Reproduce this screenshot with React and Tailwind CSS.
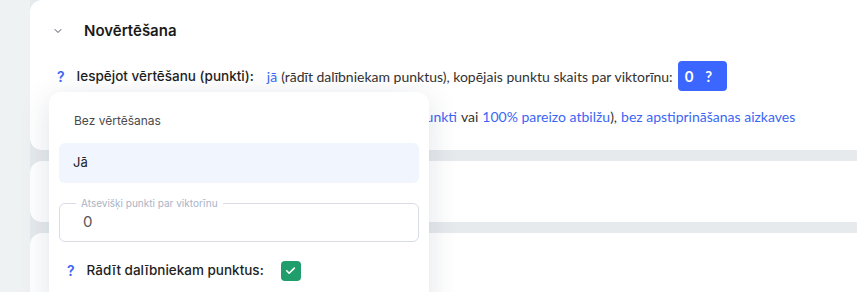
import React from "react";

const inter = "font-['Inter',sans-serif]";

const Q = ({ className = "" }) => (
  <span className={"font-['Inter',sans-serif] text-[#3b66f5] font-semibold text-[14px] " + className}>?</span>
);

export default function App() {
  return (
    <div className="relative h-[292px] w-[857px] overflow-hidden bg-[#eef2f2] font-['Lato',sans-serif] text-[#222]">
      <div className="ml-[30px] -mr-6 flex flex-col gap-[11px] bg-[#e6eaed]">
        <div className="h-[150px] rounded-xl bg-white pl-[23px] pt-[19px]">
          <div className="flex h-[24px] items-center">
            <svg width="12" height="12" viewBox="0 0 24 24" fill="none" stroke="#4b5563" strokeWidth="2" strokeLinecap="round" strokeLinejoin="round" className="ml-[-1px]">
              <path d="M6 9l6 6 6-6" />
            </svg>
            <span className={inter + " ml-[20px] text-[15px] font-semibold text-[#1a1a1a]"}>Novērtēšana</span>
          </div>
          <div className="mt-[18px] flex h-[30px] items-center text-[14px]">
            <Q className="ml-[4px]" />
            <span className={inter + " ml-[12px] text-[13.5px] font-medium text-[#1f1f1f]"}>Iespējot vērtēšanu (punkti):</span>
            <span className="ml-[13px] text-[#3b66f5]">jā</span>
            <span className="ml-[4px] text-[#333]">(rādīt dalībniekam punktus), kopējais punktu skaits par viktorīnu:</span>
            <span className="ml-[5px] flex h-[30px] w-[49px] items-center rounded-[4px] bg-[#3b66ff] pl-[7px] font-bold text-white text-[15px]">
              0<span className="ml-[12px]">?</span>
            </span>
          </div>
          <div className="mt-[15px] flex items-center whitespace-nowrap text-[14px] text-[#333]">
            <span className="invisible flex items-center">
              <Q className="ml-[1px]" />
              <span className={inter + " ml-[12px] font-medium text-[#1f1f1f]"}>Izsniegt sertifikātu:</span>
              <span className="ml-[11px] text-[#3b66f5]">jā</span>
              <span className="ml-[4px]">(ja sasniegts rezultāts vismaz</span>
            </span>
            <span className="ml-[4px] text-[#3b66f5]">0 punkti</span>
            <span className="ml-[4px]">vai</span>
            <span className="ml-[4px] text-[#3b66f5]">100% pareizo atbilžu</span>
            <span>),</span>
            <span className="ml-[4px] text-[#3b66f5]">bez apstiprināšanas aizkaves</span>
          </div>
        </div>
        <div className="h-[61px] rounded-xl bg-white" />
        <div className="h-[80px] rounded-xl bg-white" />
      </div>

      <div className={inter + " absolute left-[49px] top-[92px] w-[380px] h-[230px] rounded-xl bg-white px-[10px] pt-[19px] shadow-[0_6px_30px_rgba(40,60,90,0.14)]"}>
        <div className="pl-[15px] text-[12px] leading-[20px] text-[#4a4a4a]">Bez vērtēšanas</div>
        <div className="mt-[12px] flex h-[40px] items-center rounded-md bg-[#f0f5fe] pl-[14px] text-[13px] text-[#222]">Jā</div>
        <fieldset className="mt-[14px] h-[45px] rounded-md border border-[#d9dce6] px-[16px]">
          <legend className="px-[5px] text-[10px] leading-[12px] text-[#aab3c6]">Atsevišķi punkti par viktorīnu</legend>
          <div className="mt-[2px] pl-[7px] text-[15px] text-[#555]">0</div>
        </fieldset>
        <div className="mt-[18px] flex items-center">
          <Q className="ml-[8px]" />
          <span className="ml-[12px] text-[13.5px] font-medium text-[#1f1f1f]">Rādīt dalībniekam punktus:</span>
          <span className="ml-[17px] flex h-[20px] w-[20px] items-center justify-center rounded-[4px] bg-[#1f9e6b]">
            <svg width="13" height="13" viewBox="0 0 24 24" fill="none" stroke="white" strokeWidth="3" strokeLinecap="round" strokeLinejoin="round">
              <path d="M5 12.5l4.5 4.5L19 7.5" />
            </svg>
          </span>
        </div>
      </div>
    </div>
  );
}
